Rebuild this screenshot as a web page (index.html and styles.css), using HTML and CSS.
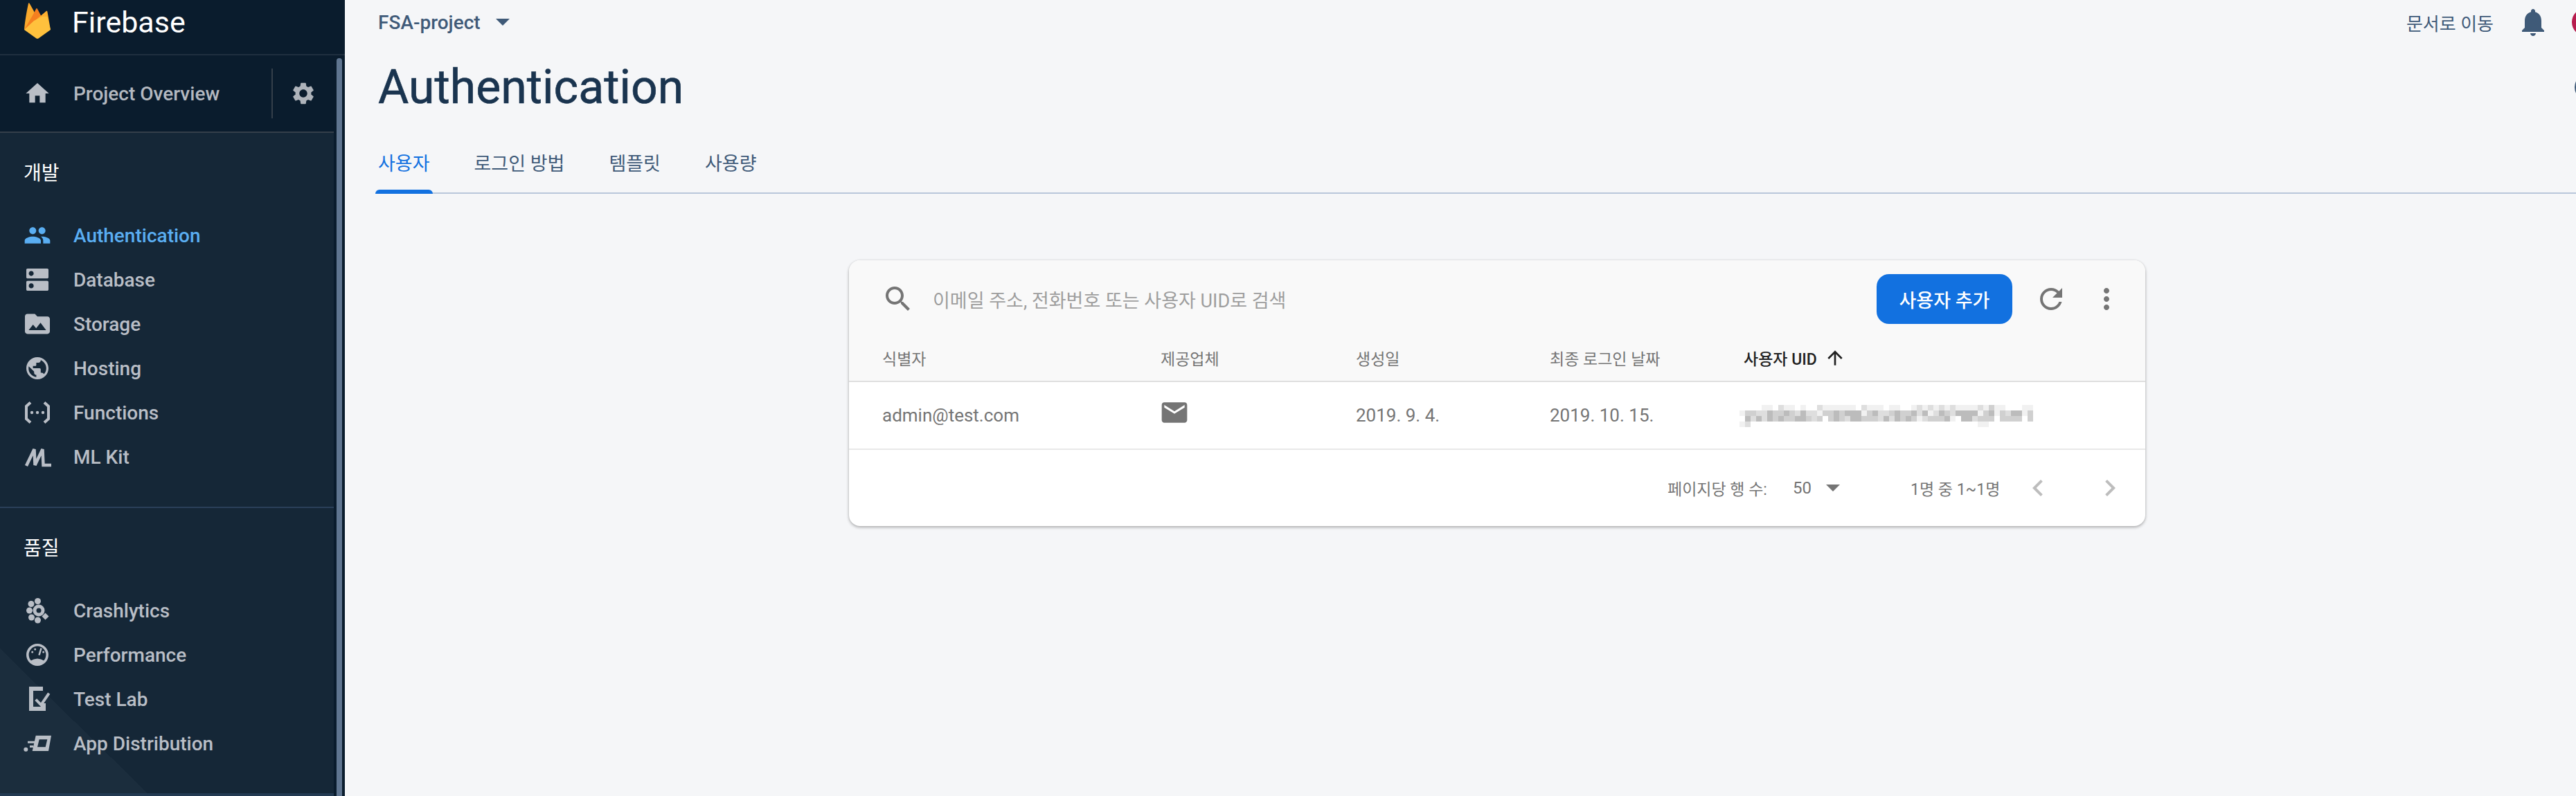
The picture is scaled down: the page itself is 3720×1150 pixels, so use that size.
FILE: index.html
```html
<!DOCTYPE html>
<html lang="ko">
<head>
    <meta charset="UTF-8">
    <title>Authentication - Firebase</title>
    <link rel="stylesheet" href="styles.css">
</head>
<body>
<aside class="sidebar">
    <div class="brand">
        <svg class="brand-logo" viewBox="0 0 38 52">
            <path fill="#fba92c" d="M0 39C1 26 4 10 6 1c.3-1 1.2-1 1.7 0L15 14 8 30z"/>
            <path fill="#f57f20" d="M0 39 14 15l3.2-6.4c.4-.8 1.2-.8 1.6 0L26 22z"/>
            <path fill="#fdb02f" d="M0 39 31.5 12.200c.8-.7 1.700-.4 1.900.6L38 39z"/>
            <path fill="#ffc13d" d="M0 39 14 26 26 20 33 20 38 39 20.500 51.500c-1 .6-2 .6-3 0z"/>
        </svg>
        <span class="brand-name">Firebase</span>
    </div>
    <div class="side-body">
        <div class="side-col">
            <div class="overview">
                <svg class="nav-icon" viewBox="0 0 24 24"><path d="M10 20v-6h4v6h5v-8h3L12 3 2 12h3v8z"/></svg>
                <span class="overview-label">Project Overview</span>
                <span class="overview-sep"></span>
                <svg class="gear" viewBox="0 0 24 24"><path d="M19.140 12.940c.04-.3.06-.61.06-.94 0-.32-.02-.64-.07-.94l2.030-1.580c.18-.14.23-.41.12-.61l-1.920-3.320c-.12-.22-.37-.29-.59-.22l-2.390.96c-.5-.38-1.030-.7-1.620-.94l-.36-2.540c-.04-.24-.24-.41-.48-.41h-3.840c-.24 0-.43.17-.47.41l-.36 2.540c-.59.24-1.130.57-1.620.94l-2.390-.96c-.22-.08-.47 0-.59.22L2.740 8.870c-.12.21-.08.47.12.61l2.030 1.580c-.05.3-.09.63-.09.94s.02.64.07.94l-2.030 1.580c-.18.14-.23.41-.12.61l1.920 3.320c.12.22.37.29.59.22l2.390-.96c.5.38 1.030.7 1.620.94l.36 2.540c.05.24.24.41.48.41h3.840c.24 0 .44-.17.47-.41l.36-2.540c.59-.24 1.130-.56 1.620-.94l2.390.96c.22.08.47 0 .59-.22l1.920-3.320c.12-.22.07-.47-.12-.61l-2.010-1.580zM12 15.600c-1.980 0-3.600-1.620-3.600-3.600s1.620-3.600 3.600-3.600 3.600 1.620 3.600 3.600-1.620 3.600-3.600 3.600z"/></svg>
            </div>
            <nav class="side-nav">
                <section class="nav-section nav-dev">
                    <h2 class="nav-heading">개발</h2>
                    <a class="nav-item active">
                        <svg class="nav-icon" viewBox="0 0 24 24"><path d="M16 11c1.660 0 2.990-1.340 2.990-3S17.660 5 16 5c-1.660 0-3 1.340-3 3s1.340 3 3 3zm-8 0c1.660 0 2.990-1.340 2.990-3S9.660 5 8 5C6.340 5 5 6.340 5 8s1.340 3 3 3zm0 2c-2.330 0-7 1.170-7 3.500V19h14v-2.500c0-2.330-4.670-3.500-7-3.500zm8 0c-.29 0-.62.02-.97.05 1.160.84 1.970 1.970 1.970 3.450V19h6v-2.500c0-2.330-4.670-3.500-7-3.500z"/></svg>
                        Authentication
                    </a>
                    <a class="nav-item">
                        <svg class="nav-icon" viewBox=".75 .75 22.500 22.500"><path d="M20 13H4c-.55 0-1 .45-1 1v6c0 .55.45 1 1 1h16c.55 0 1-.45 1-1v-6c0-.55-.45-1-1-1zM7 19c-1.100 0-2-.9-2-2s.9-2 2-2 2 .9 2 2-.9 2-2 2zM20 3H4c-.55 0-1 .45-1 1v6c0 .55.45 1 1 1h16c.55 0 1-.45 1-1V4c0-.55-.45-1-1-1zM7 9c-1.100 0-2-.9-2-2s.9-2 2-2 2 .9 2 2-.9 2-2 2z"/></svg>
                        Database
                    </a>
                    <a class="nav-item">
                        <svg class="nav-icon" viewBox=".9 .9 22.200 22.200"><path fill-rule="evenodd" d="M20 6h-8l-2-2H4c-1.100 0-2 .9-2 2v12c0 1.100.9 2 2 2h16c1.100 0 2-.9 2-2V8c0-1.100-.9-2-2-2zM5 17l3.500-4.500 2.500 3 3.500-4.500 4.500 6z"/></svg>
                        Storage
                    </a>
                    <a class="nav-item">
                        <svg class="nav-icon" viewBox="-.5 -.5 25 25"><path d="M12 2C6.480 2 2 6.480 2 12s4.480 10 10 10 10-4.480 10-10S17.520 2 12 2zm-1 17.930c-3.950-.49-7-3.850-7-7.930 0-.62.08-1.210.21-1.790L9 15v1c0 1.100.9 2 2 2v1.930zm6.900-2.540c-.26-.81-1-1.390-1.900-1.390h-1v-3c0-.55-.45-1-1-1H8v-2h2c.55 0 1-.45 1-1V7h2c1.100 0 2-.9 2-2v-.41c2.930 1.190 5 4.060 5 7.410 0 2.080-.8 3.970-2.100 5.390z"/></svg>
                        Hosting
                    </a>
                    <a class="nav-item">
                        <svg class="nav-icon" viewBox="0 0 40 40">
                            <path class="line" stroke-width="4" d="M10 5.500 4 11v18l6 5.500M30 5.500l6 5.500v18l-6 5.500"/>
                            <circle cx="12" cy="20" r="2.200"/><circle cx="20" cy="20" r="2.200"/><circle cx="28" cy="20" r="2.200"/>
                        </svg>
                        Functions
                    </a>
                    <a class="nav-item">
                        <svg class="nav-icon" viewBox="0 0 40 40">
                            <path class="line" stroke-width="4.500" d="M4 33 15.500 9 16.500 32 27.500 9 28.500 32H40"/>
                        </svg>
                        ML Kit
                    </a>
                </section>
                <section class="nav-section nav-quality">
                    <h2 class="nav-heading">품질</h2>
                    <a class="nav-item">
                        <svg class="nav-icon" viewBox="0 0 40 40">
                            <circle cx="8.500" cy="20" r="4.500"/><circle cx="11" cy="10.500" r="4.500"/><circle cx="20.500" cy="6.500" r="4.500"/><circle cx="11.500" cy="30" r="4.500"/><circle cx="20.500" cy="34" r="4.500"/>
                            <circle cx="22" cy="20" r="8.500"/>
                            <path class="line" stroke-width="7" d="M29 26l5 5"/>
                            <circle class="hole" cx="22" cy="20" r="3.500"/>
                        </svg>
                        Crashlytics
                    </a>
                    <a class="nav-item">
                        <svg class="nav-icon" viewBox="0 0 40 40">
                            <circle class="line" stroke-width="3.600" cx="20" cy="20" r="14.200"/>
                            <path d="M9.500 29Q20 22 30.500 29A14 14 0 0 1 9.500 29z"/>
                            <path class="line" stroke-width="2.600" d="M22.500 20.500 25.500 10.500"/>
                            <circle cx="12.700" cy="16" r="1.500"/><circle cx="16.700" cy="12" r="1.500"/><circle cx="28.700" cy="16" r="1.500"/>
                        </svg>
                        Performance
                    </a>
                    <a class="nav-item">
                        <svg class="nav-icon" viewBox="0 0 40 40">
                            <path class="line" stroke-width="6" d="M28 5H11v29h18v-8"/>
                            <path class="line" stroke-width="4" d="M17.700 20.700l7.600 7.600L36.700 11.700"/>
                        </svg>
                        Test Lab
                    </a>
                    <a class="nav-item">
                        <svg class="nav-icon" viewBox="0 0 40 40">
                            <path fill-rule="evenodd" d="M17.700 8.700H40L36 31H12.700zM22.700 14.300h11.600L31.700 25.300H20z"/>
                            <circle cx="3.300" cy="28.700" r="3"/>
                            <path class="line" stroke-width="3" d="M6 18.300h10M9 24.500h5"/>
                        </svg>
                        App Distribution
                    </a>
                </section>
            </nav>
        </div>
        <div class="scroll-track"><div class="scroll-thumb"></div></div>
    </div>
</aside>

<main class="main">
    <div class="topbar">
        <div class="project">
            FSA-project
            <span class="caret"></span>
        </div>
        <div class="top-actions">
            <span class="docs-link">문서로 이동</span>
            <svg class="bell" viewBox="0 0 24 24"><path d="M12 22c1.100 0 2-.9 2-2h-4c0 1.100.89 2 2 2zm6-6v-5c0-3.070-1.640-5.640-4.500-6.320V4c0-.83-.67-1.500-1.500-1.500s-1.500.67-1.500 1.500v.68C7.630 5.360 6 7.920 6 11v5l-2 2v1h16v-1l-2-2z"/></svg>
            <span class="avatar"></span>
        </div>
    </div>
    <div class="title-row">
        <h1 class="title">Authentication</h1>
        <span class="help-ring"></span>
    </div>
    <div class="tabs">
        <a class="tab current">사용자</a>
        <a class="tab">로그인 방법</a>
        <a class="tab">템플릿</a>
        <a class="tab">사용량</a>
    </div>

    <div class="card">
        <div class="card-head">
            <div class="toolbar">
                <svg class="icon search-icon" viewBox="0 0 24 24"><path d="M15.500 14h-.79l-.28-.27C15.410 12.590 16 11.110 16 9.500 16 5.910 13.090 3 9.500 3S3 5.910 3 9.500 5.910 16 9.500 16c1.610 0 3.090-.59 4.230-1.570l.27.28v.79l5 4.990L20.490 19l-4.990-5zm-6 0C7.010 14 5 11.990 5 9.500S7.010 5 9.500 5 14 7.010 14 9.500 11.990 14 9.500 14z"/></svg>
                <span class="search-text">이메일 주소, 전화번호 또는 사용자 UID로 검색</span>
                <button class="add-btn">사용자 추가</button>
                <svg class="icon refresh-icon" viewBox="0 0 24 24"><path d="M17.650 6.350C16.200 4.900 14.210 4 12 4c-4.420 0-7.990 3.580-7.990 8s3.570 8 7.990 8c3.730 0 6.840-2.550 7.730-6h-2.080c-.82 2.330-3.040 4-5.650 4-3.310 0-6-2.690-6-6s2.690-6 6-6c1.660 0 3.140.69 4.220 1.780L13 11h7V4l-2.350 2.350z"/></svg>
                <svg class="icon more-icon" viewBox="0 0 24 24"><path d="M12 8c1.100 0 2-.9 2-2s-.9-2-2-2-2 .9-2 2 .9 2 2 2zm0 2c-1.100 0-2 .9-2 2s.9 2 2 2 2-.9 2-2-.9-2-2-2zm0 6c-1.100 0-2 .9-2 2s.9 2 2 2 2-.9 2-2-.9-2-2-2z"/></svg>
            </div>
            <div class="grid-row head-row">
                <span>식별자</span>
                <span>제공업체</span>
                <span>생성일</span>
                <span>최종 로그인 날짜</span>
                <span class="sorted">사용자 UID
                    <svg class="sort-arrow" viewBox="0 0 24 24"><path d="M4 12l1.410 1.410L11 7.830V20h2V7.830l5.580 5.590L20 12l-8-8-8 8z"/></svg>
                </span>
            </div>
        </div>
        <div class="grid-row body-row">
            <span>admin@test.com</span>
            <span><svg class="icon mail-icon" viewBox="0 0 24 24"><path d="M20 4H4c-1.100 0-1.990.9-1.990 2L2 18c0 1.100.9 2 2 2h16c1.100 0 2-.9 2-2V6c0-1.100-.9-2-2-2zm0 4l-8 5-8-5V6l8 5 8-5v2z"/></svg></span>
            <span>2019. 9. 4.</span>
            <span>2019. 10. 15.</span>
            <span>
                <!-- 가려진 UID -->
                <svg class="uid-blur" viewBox="0 0 53 5" shape-rendering="crispEdges" fill="none">
                    <path stroke="#f1f1f1" d="M4 .5h2M8 .5h2M11 .5h1M15 .5h6M23 .5h3M27 .5h2M31 .5h1M33 .5h1M35 .5h1M37 .5h1M39 .5h4M44 .5h1M46 .5h2M51 .5h2M0 1.500h1M14 1.500h1M22 1.500h1M34 1.500h1M43 1.500h1M46 1.500h1M51 1.500h1M32 2.500h1M38 2.500h1M0 3.500h1M43 3.500h2"/>
                    <path stroke="#dedede" d="M7 .5h1M14 .5h1M22 .5h1M32 .5h1M34 .5h1M36 .5h1M38 .5h1M43 .5h1M3 1.500h2M10 1.500h1M12 1.500h2M25 1.500h2M32 1.500h1M35 1.500h1M38 1.500h1M48 1.500h1M2 2.500h1M4 2.500h1M13 2.500h1M19 2.500h1M25 2.500h1M27 2.500h1M33 2.500h1M42 2.500h1M1 3.500h1"/>
                    <path stroke="#d0d0d0" d="M45 .5h1M1 1.500h2M6 1.500h2M9 1.500h1M15 1.500h2M18 1.500h1M23 1.500h1M27 1.500h1M29 1.500h2M37 1.500h1M44 1.500h1M47 1.500h1M52 1.500h1M6 2.500h1M8 2.500h2M12 2.500h1M14 2.500h1M16 2.500h1M18 2.500h1M22 2.500h3M29 2.500h1M31 2.500h1M34 2.500h3M43 2.500h3M47 2.500h4M52 2.500h1"/>
                    <path stroke="#bcbcbc" d="M5 1.500h1M8 1.500h1M11 1.500h1M17 1.500h1M19 1.500h3M24 1.500h1M28 1.500h1M31 1.500h1M33 1.500h1M36 1.500h1M39 1.500h4M45 1.500h1M49 1.500h2M1 2.500h1M3 2.500h1M5 2.500h1M7 2.500h1M10 2.500h2M17 2.500h1M20 2.500h2M26 2.500h1M28 2.500h1M30 2.500h1M37 2.500h1M40 2.500h2"/>
                </svg>
            </span>
        </div>
        <div class="card-foot">
            <span class="rows-label">페이지당 행 수:</span>
            <span class="rows-value">50</span>
            <span class="rows-caret"></span>
            <span class="range">1명 중 1~1명</span>
            <svg class="icon page-icon prev" viewBox="0 0 24 24"><path d="M15.410 7.410L14 6l-6 6 6 6 1.410-1.410L10.830 12z"/></svg>
            <svg class="icon page-icon next" viewBox="0 0 24 24"><path d="M10 6L8.590 7.410 13.170 12l-4.580 4.590L10 18l6-6z"/></svg>
        </div>
    </div>
</main>
</body>
</html>
```

FILE: styles.css
```css
* {
    box-sizing: border-box;
}
html, body {
    margin: 0;
    height: 1150px;
    overflow: hidden;
}
body {
    display: flex;
    width: 3720px;
    background-color: #f5f6f8;
    font-family: Roboto, "Noto Sans CJK KR", sans-serif;
    font-size: 28px;
}

/* 사이드바 */
.sidebar {
    flex: none;
    width: 498px;
    height: 1150px;
    display: flex;
    flex-direction: column;
    background-color: #0a1c2d;
}
.brand {
    flex: none;
    height: 80px;
    display: flex;
    align-items: flex-start;
    border-bottom: 2px solid #1f2f3f;
}
.brand-logo {
    width: 38px;
    height: 52px;
    margin: 4px 0 0 35px;
}
.brand-name {
    margin: 2px 0 0 31px;
    font-size: 43px;
    line-height: 60px;
    color: #fff;
}
.side-body {
    flex: 1;
    display: flex;
    min-height: 0;
}
.side-col {
    width: 482px;
    display: flex;
    flex-direction: column;
}
.scroll-track {
    width: 16px;
    padding: 4px 4px 0;
}
.scroll-thumb {
    height: 100%;
    background-color: #5f7590;
    border-radius: 4px 4px 0 0;
}
.overview {
    flex: none;
    height: 112px;
    display: flex;
    align-items: center;
    padding-left: 34px;
    border-bottom: 2px solid #343f4a;
    font-weight: 500;
    color: #b4b9c0;
}
.overview-label {
    margin-left: 32px;
    width: 286px;
}
.overview-sep {
    width: 2px;
    height: 72px;
    background-color: #343f4a;
}
.gear {
    width: 38px;
    height: 38px;
    margin-left: 25px;
    fill: #aeb3ba;
}
.side-nav {
    flex: 1;
    display: flex;
    flex-direction: column;
    background-color: #152737;
}
.nav-section {
    padding-top: 27px;
}
.nav-dev {
    padding-bottom: 40px;
    border-bottom: 2px solid #2a4059;
}
.nav-quality {
    flex: 1;
    border-bottom: 4px solid #233a52;
    background: linear-gradient(to top right, #1b2d3d 50%, transparent 50%) left bottom / 213px 209px no-repeat;
}
.nav-heading {
    margin: 0 0 25px;
    padding-left: 34px;
    height: 64px;
    line-height: 64px;
    font-size: 28px;
    font-weight: 400;
    color: #fff;
}
.nav-item {
    height: 64px;
    display: flex;
    align-items: center;
    gap: 32px;
    padding-left: 34px;
    font-weight: 500;
    color: #b9bec6;
}
.nav-icon {
    flex: none;
    width: 40px;
    height: 40px;
    fill: #b9bec6;
    color: #b9bec6;
}
.nav-icon .line {
    fill: none;
    stroke: currentColor;
}
.nav-icon .hole {
    fill: #152737;
}
.nav-item.active {
    color: #5aaef2;
}
.nav-item.active .nav-icon {
    fill: #5aaef2;
}

/* 본문 */
.main {
    flex: none;
    width: 3328px;
    color: #3f5a78;
}
.topbar {
    height: 64px;
    display: flex;
    justify-content: space-between;
    align-items: center;
    padding: 0 72px 0 48px;
}
.project {
    display: flex;
    align-items: center;
    gap: 22px;
    font-weight: 500;
}
.caret {
    width: 0;
    height: 0;
    border-left: 10px solid transparent;
    border-right: 10px solid transparent;
    border-top: 10px solid #3f5a78;
}
.top-actions {
    display: flex;
    align-items: center;
}
.docs-link {
    font-size: 26px;
}
.bell {
    width: 48px;
    height: 48px;
    margin: 0 32px 0 33px;
    fill: #3f5a78;
}
.avatar {
    width: 40px;
    height: 40px;
    border-radius: 50%;
    background-color: #b71c4e;
}
.title-row {
    height: 124px;
    display: flex;
    justify-content: space-between;
    align-items: center;
    padding: 0 68px 0 48px;
}
.title {
    margin: 0;
    font-size: 68px;
    font-weight: 400;
    -webkit-text-stroke: .6px #1a344f;
    color: #1a344f;
}
.help-ring {
    width: 40px;
    height: 40px;
    border: 4px solid #3f5a78;
    border-radius: 50%;
}
.tabs {
    height: 92px;
    display: flex;
    gap: 64px;
    margin-left: 48px;
    border-bottom: 2px solid #b9c7da;
    font-size: 27px;
}
.tab {
    position: relative;
    padding-top: 29px;
    line-height: 40px;
}
.tab.current {
    color: #1271e0;
}
.tab.current::after {
    content: "";
    position: absolute;
    left: -4px;
    right: -4px;
    bottom: -2px;
    height: 6px;
    background-color: #1271e0;
    border-radius: 6px 6px 0 0;
}

/* 사용자 테이블 */
.card {
    width: 1872px;
    margin: 96px auto 0;
    background-color: #fff;
    border-radius: 16px;
    box-shadow: 0 2px 4px rgba(0, 0, 0, .28), 0 0 3px rgba(0, 0, 0, .1);
    color: #757575;
}
.card-head {
    height: 176px;
    background-color: #f9f9f9;
    border-radius: 16px 16px 0 0;
    border-bottom: 2px solid #dedede;
}
.toolbar {
    height: 112px;
    display: flex;
    align-items: center;
    padding: 0 32px 0 47px;
}
.icon {
    flex: none;
    fill: #757575;
}
.search-icon {
    width: 48px;
    height: 48px;
}
.search-text {
    flex: 1;
    margin-left: 26px;
    font-size: 27px;
    color: #9e9e9e;
}
.add-btn {
    width: 196px;
    height: 72px;
    border: 0;
    border-radius: 18px;
    background-color: #1271e0;
    color: #fff;
    font-family: inherit;
    font-size: 27px;
    font-weight: 500;
}
.refresh-icon {
    width: 48px;
    height: 48px;
    margin-left: 32px;
}
.more-icon {
    width: 48px;
    height: 48px;
    margin-left: 32px;
}
.grid-row {
    display: grid;
    grid-template-columns: 402px 282px 280px 280px 1fr;
    align-items: center;
    padding-left: 48px;
}
.head-row {
    height: 58px;
    font-size: 23px;
}
.sorted {
    display: flex;
    align-items: center;
    gap: 10px;
    font-weight: 500;
    color: #212121;
}
.sort-arrow {
    width: 32px;
    height: 32px;
    fill: #212121;
}
.body-row {
    height: 98px;
    border-bottom: 2px solid #e9e9e9;
    font-size: 26px;
}
.body-row span {
    display: flex;
    align-items: center;
}
.mail-icon {
    width: 44px;
    height: 44px;
    margin: -8px 0 0 -2px;
}
.uid-blur {
    display: block;
    width: 424px;
    height: 40px;
    margin: 10px 0 0 -6px;
}
.card-foot {
    height: 110px;
    display: flex;
    align-items: center;
    padding-left: 1182px;
    font-size: 23px;
}
.rows-label {
    width: 181px;
}
.rows-value {
    width: 48px;
    font-size: 24px;
}
.rows-caret {
    width: 0;
    height: 0;
    border-left: 10px solid transparent;
    border-right: 10px solid transparent;
    border-top: 10px solid #757575;
    margin-right: 102px;
}
.range {
    width: 160px;
}
.page-icon {
    width: 48px;
    height: 48px;
    fill: #bdbdbd;
}
.next {
    margin-left: 56px;
}
```
